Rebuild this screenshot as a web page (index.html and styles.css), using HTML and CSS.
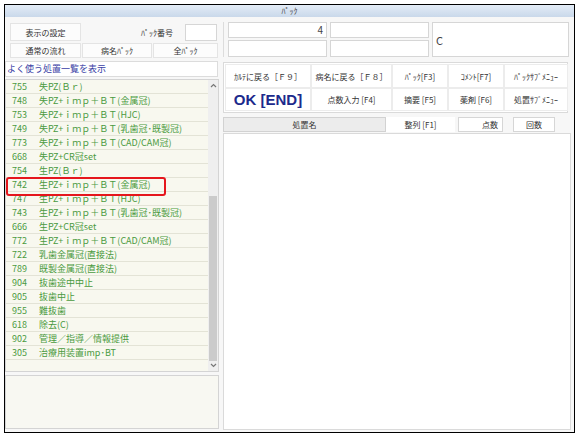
FILE: index.html
```html
<!DOCTYPE html>
<html lang="ja">
<head>
    <meta charset="UTF-8">
    <title>ﾊﾟｯｸ</title>
    <link rel="stylesheet" href="styles.css">
</head>
<body>
    <div class="ventana">
        <div class="titulo">ﾊﾟｯｸ</div>
        <div class="cuerpo">
            <div class="izquierda">
                <div class="cabecera">
                    <div class="fila1">
                        <div class="boton">表示の設定</div>
                        <div class="etiqueta">ﾊﾟｯｸ番号</div>
                        <div class="entrada"></div>
                    </div>
                    <div class="fila2">
                        <div class="boton">通常の流れ</div>
                        <div class="boton">病名ﾊﾟｯｸ</div>
                        <div class="boton">全ﾊﾟｯｸ</div>
                    </div>
                </div>
                <div class="frecuentes">よく使う処置一覧を表示</div>
                <div class="lista">
                    <div class="filas">
                        <div class="item"><span class="num">755</span><span>失PZ(Ｂｒ)</span></div>
                        <div class="item"><span class="num">748</span><span>失PZ+ｉｍｐ＋ＢＴ(金属冠)</span></div>
                        <div class="item"><span class="num">753</span><span>失PZ+ｉｍｐ＋ＢＴ(HJC)</span></div>
                        <div class="item"><span class="num">749</span><span>失PZ+ｉｍｐ＋ＢＴ(乳歯冠･既製冠)</span></div>
                        <div class="item"><span class="num">773</span><span>失PZ+ｉｍｐ＋ＢＴ(CAD/CAM冠)</span></div>
                        <div class="item"><span class="num">668</span><span>失PZ+CR冠set</span></div>
                        <div class="item"><span class="num">754</span><span>生PZ(Ｂｒ)</span></div>
                        <div class="item"><span class="num">742</span><span>生PZ+ｉｍｐ＋ＢＴ(金属冠)</span></div>
                        <div class="item"><span class="num">747</span><span>生PZ+ｉｍｐ＋ＢＴ(HJC)</span></div>
                        <div class="item"><span class="num">743</span><span>生PZ+ｉｍｐ＋ＢＴ(乳歯冠･既製冠)</span></div>
                        <div class="item"><span class="num">666</span><span>生PZ+CR冠set</span></div>
                        <div class="item"><span class="num">772</span><span>生PZ+ｉｍｐ＋ＢＴ(CAD/CAM冠)</span></div>
                        <div class="item"><span class="num">722</span><span>乳歯金属冠(直接法)</span></div>
                        <div class="item"><span class="num">789</span><span>既製金属冠(直接法)</span></div>
                        <div class="item"><span class="num">904</span><span>抜歯途中中止</span></div>
                        <div class="item"><span class="num">905</span><span>抜歯中止</span></div>
                        <div class="item"><span class="num">955</span><span>難抜歯</span></div>
                        <div class="item"><span class="num">618</span><span>除去(C)</span></div>
                        <div class="item"><span class="num">902</span><span>管理／指導／情報提供</span></div>
                        <div class="item"><span class="num">305</span><span>治療用装置imp･BT</span></div>
                    </div>
                    <div class="barra">
                        <div class="flecha">
                            <svg width="7" height="5" viewBox="0 0 7 5"><path d="M1 4 L3.5 1.5 L6 4" fill="none" stroke="#777" stroke-width="1.2"/></svg>
                        </div>
                        <div class="pista"></div>
                        <div class="pulgar"></div>
                        <div class="flecha abajo">
                            <svg width="7" height="5" viewBox="0 0 7 5"><path d="M1 1 L3.5 3.5 L6 1" fill="none" stroke="#777" stroke-width="1.2"/></svg>
                        </div>
                    </div>
                    <div class="marca"></div>
                </div>
                <div class="memo"></div>
            </div>
            <div class="derecha">
                <div class="campos">
                    <div class="campo numero">4</div>
                    <div class="campo"></div>
                    <div class="campo grande">C</div>
                    <div class="campo"></div>
                    <div class="campo"></div>
                </div>
                <div class="teclas">
                    <div class="tecla">ｶﾙﾃに戻る［Ｆ９］</div>
                    <div class="tecla">病名に戻る［Ｆ８］</div>
                    <div class="tecla">ﾊﾟｯｸ[F3]</div>
                    <div class="tecla">ｺﾒﾝﾄ[F7]</div>
                    <div class="tecla">ﾊﾟｯｸｻﾌﾞﾒﾆｭｰ</div>
                    <div class="tecla ok">OK [END]</div>
                    <div class="tecla">点数入力 [F4]</div>
                    <div class="tecla">摘要 [F5]</div>
                    <div class="tecla">薬剤 [F6]</div>
                    <div class="tecla">処置ｻﾌﾞﾒﾆｭｰ</div>
                </div>
                <div class="encabezado">
                    <div class="col nombre">処置名</div>
                    <div class="col orden">整列 [F1]</div>
                    <div class="col puntos">点数</div>
                    <div class="col veces">回数</div>
                </div>
                <div class="detalle"></div>
            </div>
        </div>
    </div>
</body>
</html>
```

FILE: styles.css
```css
body {
    margin: 0;
    background-color: #fff;
    font-family: "Noto Sans CJK JP", "Liberation Sans", sans-serif;
    color: #333;
}
.ventana {
    margin: 4px 0 0 4px;
    width: 569px;
    height: 427px;
    border: 1px solid #000;
    background-color: #f7f7f7;
    display: flex;
    flex-direction: column;
}
.titulo {
    height: 12px;
    line-height: 12px;
    font-size: 8px;
    text-align: center;
    color: #444;
    background: linear-gradient(#e3ecf7, #c9d8ea);
}
.cuerpo {
    flex: 1;
    display: flex;
}
.izquierda {
    width: 214px;
    display: flex;
    flex-direction: column;
}
.cabecera {
    padding: 6px 0 0 5px;
}
.fila1 {
    display: grid;
    grid-template-columns: 71px 1fr 32px;
    height: 18px;
    margin-right: 2px;
}
.fila2 {
    display: grid;
    grid-template-columns: 71px 70px 65px;
    column-gap: 1px;
    height: 15px;
    margin-top: 2px;
}
.boton {
    background-color: #fcfcfc;
    border: 1px solid #e4e4e4;
    font-size: 8px;
    display: flex;
    align-items: center;
    justify-content: center;
    color: #333;
}
.etiqueta {
    font-size: 8px;
    display: flex;
    align-items: center;
    justify-content: flex-end;
    padding-right: 12px;
}
.entrada {
    background-color: #fff;
    border: 1px solid #d6d6d6;
    margin-top: 1px;
    height: 17px;
    box-sizing: border-box;
}
.frecuentes {
    margin-top: 3px;
    height: 16px;
    width: 213px;
    box-sizing: border-box;
    background-color: #fff;
    border: 1px solid #dcdcdc;
    font-size: 9px;
    line-height: 14px;
    color: #3a3fa6;
    padding-left: 1px;
}
.lista {
    position: relative;
    margin-top: 2px;
    height: 293px;
    display: flex;
    border: 1px solid #d4d4d4;
    box-sizing: border-box;
    background-color: #f8f8ef;
}
.filas {
    flex: 1;
}
.item {
    height: 14px;
    box-sizing: border-box;
    border-bottom: 1px solid #e3e3d6;
    font-size: 9px;
    line-height: 13px;
    color: #4a9a3e;
    display: flex;
    white-space: nowrap;
}
.num {
    width: 33px;
    padding-left: 6px;
    box-sizing: border-box;
}
.barra {
    width: 10px;
    display: flex;
    flex-direction: column;
    background-color: #efefef;
}
.flecha {
    height: 14px;
    display: flex;
    justify-content: center;
    padding-top: 3px;
    box-sizing: border-box;
}
.flecha.abajo {
    height: 10px;
    padding-top: 2px;
}
.pista {
    height: 102px;
}
.pulgar {
    height: 165px;
    margin: 0 1px;
    background-color: #cbcbcb;
}
.marca {
    position: absolute;
    left: 0;
    top: 97px;
    width: 160px;
    height: 19px;
    box-sizing: border-box;
    border: 2px solid #e5161d;
    border-radius: 3px;
}
.memo {
    margin-top: 3px;
    height: 54px;
    box-sizing: border-box;
    border: 1px solid #d4d4d4;
    background-color: #f8f8f2;
}
.derecha {
    flex: 1;
    margin-left: 4px;
    margin-right: 3px;
    display: flex;
    flex-direction: column;
}
.campos {
    margin-top: 5px;
    height: 35px;
    padding-left: 4px;
    border-left: 1px solid #dcdcdc;
    display: grid;
    grid-template-columns: 99px 99px 137px;
    grid-template-rows: 16px 17px;
    column-gap: 3px;
    row-gap: 2px;
}
.campo {
    background-color: #fff;
    border: 1px solid #d6d6d6;
    font-size: 10px;
    color: #444;
    padding: 0 3px;
}
.numero {
    text-align: right;
    line-height: 14px;
}
.grande {
    grid-column: 3;
    grid-row: 1 / span 2;
    font-size: 11px;
    display: flex;
    align-items: center;
}
.teclas {
    margin-top: 5px;
    width: 345px;
    height: 51px;
    box-sizing: border-box;
    padding: 1px;
    background-color: #fff;
    border: 1px solid #dadada;
    display: grid;
    grid-template-columns: 86px 81px 56px 56px 64px;
    grid-template-rows: 24px 23px;
}
.tecla {
    border: 1px solid #ececec;
    font-size: 8px;
    display: flex;
    align-items: center;
    justify-content: center;
    white-space: nowrap;
    color: #333;
}
.tecla.ok {
    font-size: 15px;
    font-weight: bold;
    color: #1c2a8c;
    font-family: "Liberation Sans", sans-serif;
}
.encabezado {
    margin-top: 4px;
    height: 15px;
    display: flex;
}
.col {
    font-size: 8px;
    display: flex;
    align-items: center;
    justify-content: center;
    box-sizing: border-box;
}
.nombre {
    width: 163px;
    background-color: #ececec;
    border: 1px solid #d2d2d2;
}
.orden {
    width: 69px;
    background-color: #fff;
}
.puntos {
    width: 45px;
    margin-left: 3px;
    background-color: #fff;
    border: 1px solid #d6d6d6;
    justify-content: flex-end;
    padding-right: 4px;
}
.veces {
    width: 42px;
    margin-left: 10px;
    background-color: #fff;
    border: 1px solid #d6d6d6;
}
.detalle {
    flex: 1;
    margin-top: 1px;
    margin-bottom: 2px;
    background-color: #fff;
    border: 1px solid #dadada;
}
```
